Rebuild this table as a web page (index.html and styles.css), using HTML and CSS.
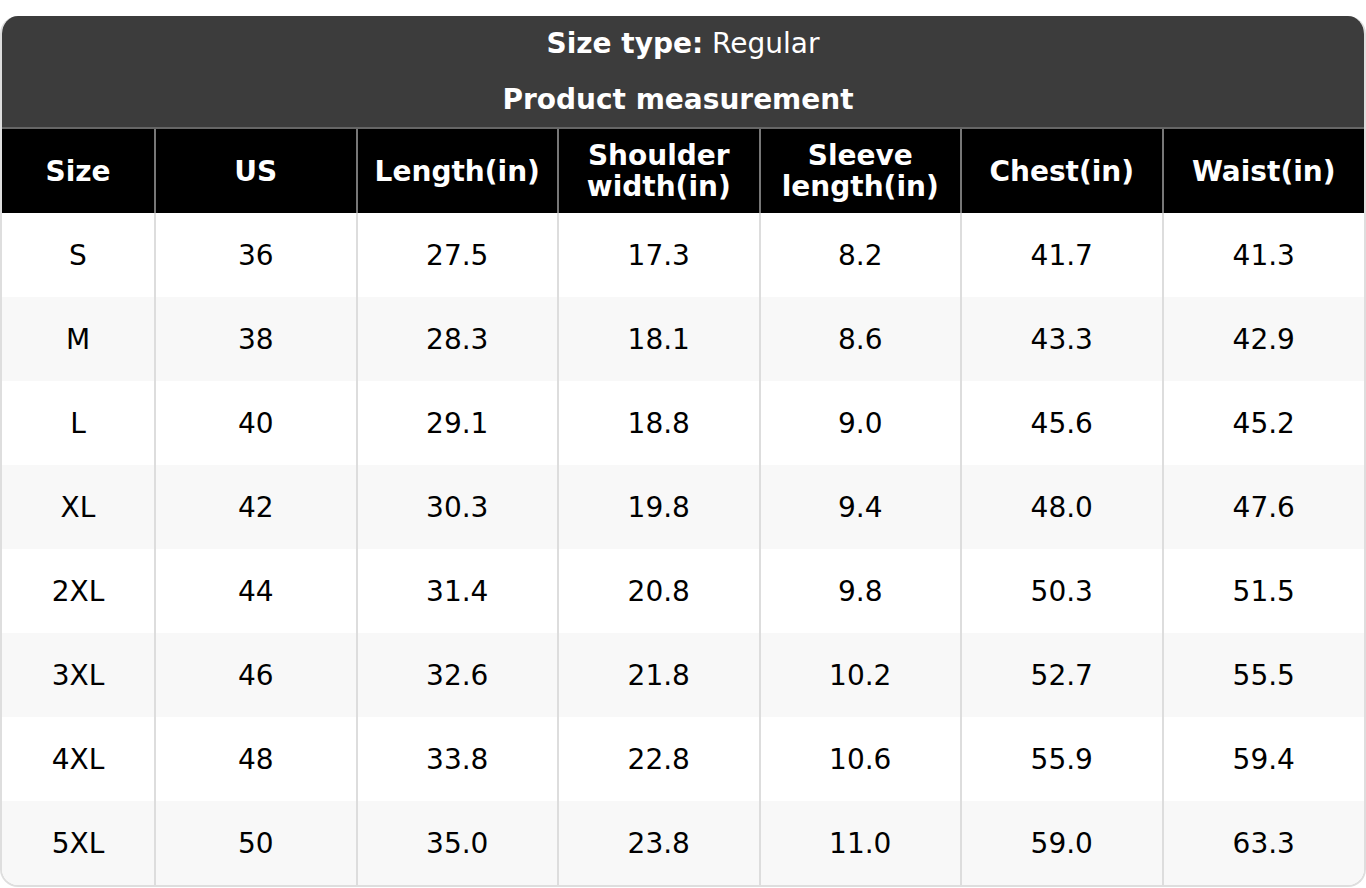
FILE: index.html
```html
<!DOCTYPE html>
<html lang="en">
<head>
<meta charset="utf-8">
<title>Size chart</title>
<link rel="stylesheet" href="styles.css">
</head>
<body>
<div class="chart">
  <div class="caption">
    <div class="caption-line caption-type"><b>Size type:</b> Regular</div>
    <div class="caption-line caption-title"><b>Product measurement</b></div>
  </div>
  <table class="sizes">
    <colgroup>
      <col class="c-size"><col><col><col><col><col><col>
    </colgroup>
    <thead>
      <tr>
        <th>Size</th>
        <th>US</th>
        <th>Length(in)</th>
        <th>Shoulder<br>width(in)</th>
        <th>Sleeve<br>length(in)</th>
        <th>Chest(in)</th>
        <th>Waist(in)</th>
      </tr>
    </thead>
    <tbody>
      <tr><td>S</td><td>36</td><td>27.5</td><td>17.3</td><td>8.2</td><td>41.7</td><td>41.3</td></tr>
      <tr><td>M</td><td>38</td><td>28.3</td><td>18.1</td><td>8.6</td><td>43.3</td><td>42.9</td></tr>
      <tr><td>L</td><td>40</td><td>29.1</td><td>18.8</td><td>9.0</td><td>45.6</td><td>45.2</td></tr>
      <tr><td>XL</td><td>42</td><td>30.3</td><td>19.8</td><td>9.4</td><td>48.0</td><td>47.6</td></tr>
      <tr><td>2XL</td><td>44</td><td>31.4</td><td>20.8</td><td>9.8</td><td>50.3</td><td>51.5</td></tr>
      <tr><td>3XL</td><td>46</td><td>32.6</td><td>21.8</td><td>10.2</td><td>52.7</td><td>55.5</td></tr>
      <tr><td>4XL</td><td>48</td><td>33.8</td><td>22.8</td><td>10.6</td><td>55.9</td><td>59.4</td></tr>
      <tr><td>5XL</td><td>50</td><td>35.0</td><td>23.8</td><td>11.0</td><td>59.0</td><td>63.3</td></tr>
    </tbody>
  </table>
</div>
</body>
</html>
```

FILE: styles.css
```css
html, body {
  margin: 0;
  padding: 0;
  background: #ffffff;
}

body {
  font-family: "DejaVu Sans", "Liberation Sans", sans-serif;
  color: #000000;
}

.chart {
  margin-top: 16px;
  border-radius: 18px;
  overflow: hidden;
  border: 2px solid #dedede;
  border-top: none;
  box-sizing: border-box;
  width: 1366px;
}

.caption {
  background: #3c3c3c;
  color: #ffffff;
  text-align: center;
  font-size: 28px;
}

.caption-type {
  height: 55px;
  line-height: 55px;
}

.caption-title {
  height: 56px;
  line-height: 58px;
  padding-right: 10px;
}

.sizes {
  width: 100%;
  border-collapse: collapse;
  table-layout: fixed;
  font-size: 28px;
  text-align: center;
}

.c-size {
  width: 153px;
}

.sizes th {
  background: #000000;
  color: #ffffff;
  font-weight: bold;
  height: 84px;
  padding: 0;
  line-height: 31px;
  border-left: 2px solid #777777;
  border-top: 2px solid #666666;
}

.sizes th:first-child,
.sizes td:first-child {
  border-left: none;
}

.sizes td {
  height: 84px;
  padding: 0;
  border-left: 2px solid #dddddd;
}

.sizes tbody tr:nth-child(even) td {
  background: #f8f8f8;
}
```
